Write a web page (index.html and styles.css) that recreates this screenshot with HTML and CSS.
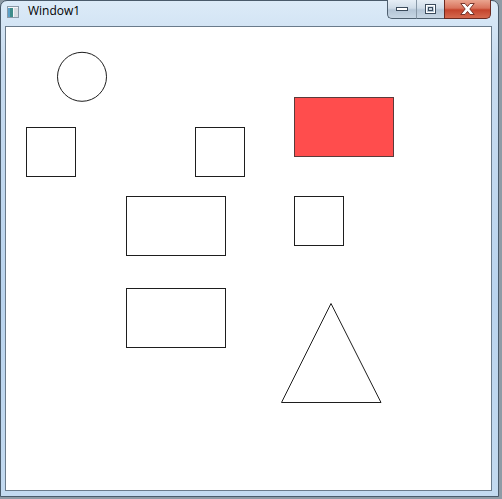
FILE: index.html
```html
<!DOCTYPE html>
<html>
<head>
<meta charset="utf-8">
<title>Window1</title>
<link rel="stylesheet" href="styles.css">
</head>
<body>
<div class="window">
  <div class="titlebar">
    <svg class="app-icon" width="12" height="12" viewBox="0 0 12 12">
      <rect x="0.5" y="0.5" width="11" height="11" fill="#f4f6f8" stroke="#8a9aa8"/>
      <rect x="1" y="2" width="5" height="9" fill="#3f8d8a"/>
      <rect x="1" y="2" width="2" height="9" fill="#5aa0c8"/>
      <rect x="7" y="2" width="4" height="9" fill="#d8dde2"/>
    </svg>
    <span class="title">Window1</span>
    <div class="caption-buttons">
      <div class="cbtn cbtn-min">
        <svg width="12" height="6" viewBox="0 0 12 6"><rect x="0.5" y="1.5" width="11" height="3" fill="#fff" stroke="#3b4b5c"/></svg>
      </div>
      <div class="cbtn cbtn-max">
        <svg width="11" height="10" viewBox="0 0 11 10"><rect x="0.5" y="0.5" width="10" height="9" fill="none" stroke="#3b4b5c"/><rect x="1.5" y="1.5" width="8" height="7" fill="none" stroke="#fff"/><rect x="3.5" y="3.5" width="4" height="3" fill="#c9d6e2" stroke="#3b4b5c"/></svg>
      </div>
      <div class="cbtn cbtn-close">
        <svg width="15" height="12" viewBox="0 0 15 12"><path d="M0.8 0.5 L5 0.5 L7.5 3.6 L10 0.5 L14.2 0.5 L9.8 6 L14.2 11.5 L10 11.5 L7.5 8.4 L5 11.5 L0.8 11.5 L5.2 6 Z" fill="#fff" stroke="#6b2a20" stroke-width="0.9"/></svg>
      </div>
    </div>
  </div>
  <div class="client">
    <svg class="canvas" width="485" height="463" viewBox="0 0 485 463">
      <circle class="shape" cx="76" cy="49.8" r="24.5"/>
      <rect class="shape" x="20.5" y="100.5" width="49" height="49"/>
      <rect class="shape" x="189.5" y="100.5" width="49" height="49"/>
      <rect class="shape shape-red" x="288.5" y="70.5" width="99" height="59"/>
      <rect class="shape" x="288.5" y="169.5" width="49" height="49"/>
      <rect class="shape" x="120.5" y="169.5" width="99" height="59"/>
      <rect class="shape" x="120.5" y="261.5" width="99" height="59"/>
      <polygon class="shape" points="325,276.5 275.5,375.5 375,375.5"/>
    </svg>
  </div>
</div>
</body>
</html>
```
FILE: styles.css
```css
html, body {
  margin: 0;
  padding: 0;
}
body {
  width: 502px;
  height: 499px;
  background: #8e9ba6;
  overflow: hidden;
  font-family: "Open Sans", "DejaVu Sans", sans-serif;
}
.window {
  box-sizing: border-box;
  width: 499px;
  height: 497px;
  border: 1px solid #4a5b6b;
  border-radius: 7px 7px 0 0;
  padding: 0 6px 5px 4px;
  background: linear-gradient(180deg, #dcebf8 0%, #c8dcf0 12%, #bad4ee 60%, #c3daf0 100%);
  display: flex;
  flex-direction: column;
}
.titlebar {
  height: 25px;
  display: flex;
  align-items: flex-start;
  position: relative;
}
.app-icon {
  margin: 5px 0 0 2px;
  flex: none;
}
.title {
  margin: 2px 0 0 9px;
  font-size: 12px;
  line-height: 16px;
  color: #000;
}
.caption-buttons {
  margin-left: auto;
  margin-right: 1px;
  margin-top: -1px;
  display: flex;
  height: 19px;
}
.cbtn {
  box-sizing: border-box;
  height: 19px;
  display: flex;
  align-items: center;
  justify-content: center;
  border: 1px solid #4f6070;
  border-top: none;
}
.cbtn-min {
  width: 29px;
  border-radius: 0 0 0 5px;
  background: linear-gradient(180deg, #e6eef6 0%, #cfdce8 45%, #b4c5d6 55%, #c7d6e4 100%);
  border-right: none;
}
.cbtn-max {
  width: 28px;
  background: linear-gradient(180deg, #e6eef6 0%, #cfdce8 45%, #b4c5d6 55%, #c7d6e4 100%);
  border-right: none;
  border-left: 1px solid #8797a6;
}
.cbtn-max svg {
  margin-bottom: 1px;
}
.cbtn-close {
  width: 47px;
  border-radius: 0 0 5px 0;
  background: linear-gradient(180deg, #eaa590 0%, #d9735c 45%, #c4442c 55%, #d56a4f 100%);
  border-color: #6b2a20;
}
.client {
  box-sizing: border-box;
  width: 487px;
  height: 465px;
  border: 1px solid #6a7b8b;
  background: #fff;
  flex: none;
}
.canvas {
  display: block;
}
.shape {
  fill: none;
  stroke: #1e1e1e;
  stroke-width: 1;
}
.shape-red {
  fill: #ff4d4d;
  stroke: #5b3a3a;
}
```
